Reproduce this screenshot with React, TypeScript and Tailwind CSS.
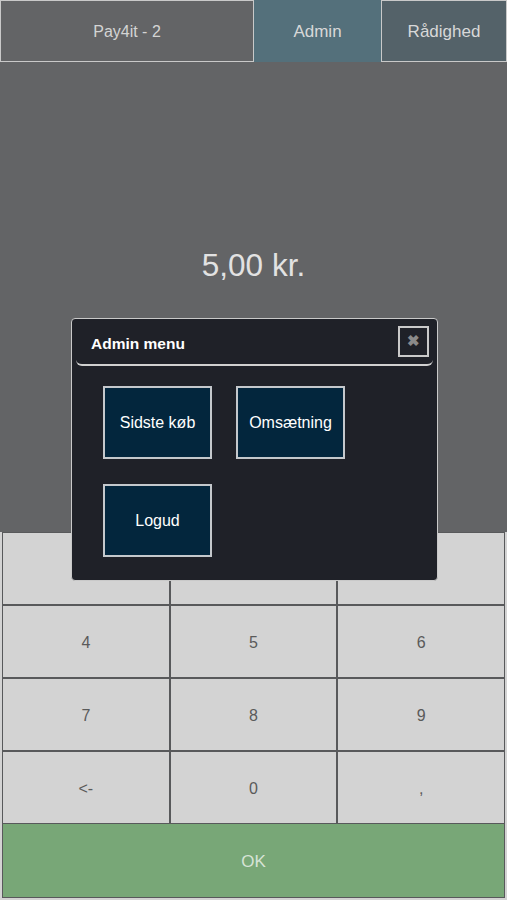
import React from 'react';

const keys = ['', '', '', '4', '5', '6', '7', '8', '9', '<-', '0', ','];

const App: React.FC = () => {
  return (
    <div
      className="relative w-[507px] h-[900px] flex flex-col bg-[#636466] overflow-hidden"
      style={{ fontFamily: '"Liberation Sans", Arial, sans-serif' }}
    >
      {/* top tabs */}
      <div className="flex h-[62px] shrink-0">
        <div className="w-[254px] flex items-center justify-center pt-[2px] bg-[#636466] border border-[#c9c9c9] text-[16px] text-[#d4d4d4]">
          Pay4it - 2
        </div>
        <div className="w-[127px] flex items-center justify-center pt-[2px] bg-[#54707b] text-[17px] text-[#d8d8d8]">
          Admin
        </div>
        <div className="flex-1 flex items-center justify-center pt-[2px] bg-[#546269] border border-[#c9c9c9] text-[17px] text-[#d8d8d8]">
          Rådighed
        </div>
      </div>

      {/* amount */}
      <div className="flex-1 flex justify-center pt-[186px]">
        <div className="text-[31.5px] leading-[34px] text-[#e2e2e2]">5,00 kr.</div>
      </div>

      {/* keypad */}
      <div className="shrink-0 bg-[#d3d3d3] px-[2px] pb-[2px]">
        <div className="grid grid-cols-3 gap-[2px] bg-[#58595b] border border-[#58595b]">
          {keys.map((k, i) => (
            <div
              key={i}
              className="h-[71px] flex items-center justify-center pt-[2px] bg-[#d3d3d3] text-[16px] text-[#5a5a5a]"
            >
              {k}
            </div>
          ))}
        </div>
        <div className="h-[74px] flex items-center justify-center pt-[3px] bg-[#78a777] border border-t-0 border-[#58595b] text-[17px] text-[#d6e3d6]">
          OK
        </div>
      </div>

      {/* admin modal */}
      <div className="absolute left-[71px] top-[318px] w-[367px] h-[263px] bg-[#1f2128] border border-[#c9c9c9] rounded-[4px]">
        <div className="mx-[4px] h-[47px] flex items-center justify-between border-b-2 border-[#d0d0d0] rounded-b-[6px] pl-[15px] pr-[4px]">
          <span className="mt-[5px] text-[15.5px] font-bold text-white">Admin menu</span>
          <div className="w-[31px] h-[31px] flex items-center justify-center border-2 border-[#c9c9c9] text-[15px] font-bold text-[#8a8a8a]">
            ✖
          </div>
        </div>
        <div className="grid grid-cols-[109px_109px] gap-x-[24px] gap-y-[25px] pl-[31px] pt-[20px]">
          {['Sidste køb', 'Omsætning', 'Logud'].map((t) => (
            <div
              key={t}
              className="h-[73px] flex items-center justify-center bg-[#03263d] border-2 border-[#c4c8cc] text-[16px] text-white"
            >
              {t}
            </div>
          ))}
        </div>
      </div>
    </div>
  );
};

export default App;
